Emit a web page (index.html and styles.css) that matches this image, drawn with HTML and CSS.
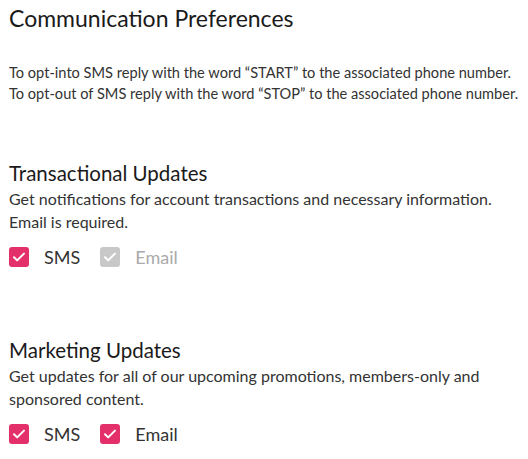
FILE: index.html
```html
<!DOCTYPE html>
<html>
<head>
<meta charset="utf-8">
<link rel="stylesheet" href="styles.css">
</head>
<body>
<div class="page">
  <h1 class="title">Communication Preferences</h1>
  <div class="intro">
    <p>To opt-into SMS reply with the word “START” to the associated phone number.</p>
    <p>To opt-out of SMS reply with the word “STOP” to the associated phone number.</p>
  </div>

  <section class="group">
    <h2 class="group-title">Transactional Updates</h2>
    <p class="group-desc">Get notifications for account transactions and necessary information. Email is required.</p>
    <div class="options">
      <label class="option">
        <span class="box checked"><svg viewBox="0 0 20 20"><path d="M5 10.2l3.2 3.2L15 6.6" /></svg></span>
        <span class="label">SMS</span>
      </label>
      <label class="option disabled">
        <span class="box checked"><svg viewBox="0 0 20 20"><path d="M5 10.2l3.2 3.2L15 6.6" /></svg></span>
        <span class="label">Email</span>
      </label>
    </div>
  </section>

  <section class="group">
    <h2 class="group-title">Marketing Updates</h2>
    <p class="group-desc">Get updates for all of our upcoming promotions, members-only and sponsored content.</p>
    <div class="options">
      <label class="option">
        <span class="box checked"><svg viewBox="0 0 20 20"><path d="M5 10.2l3.2 3.2L15 6.6" /></svg></span>
        <span class="label">SMS</span>
      </label>
      <label class="option">
        <span class="box checked"><svg viewBox="0 0 20 20"><path d="M5 10.2l3.2 3.2L15 6.6" /></svg></span>
        <span class="label">Email</span>
      </label>
    </div>
  </section>
</div>
</body>
</html>
```

FILE: styles.css
```css
* { box-sizing: border-box; }
html, body { margin: 0; padding: 0; background: #fff; }
body {
  font-family: Lato, "Open Sans", sans-serif;
  color: #333;
}
.page {
  padding: 4px 9px 0 9px;
  width: 528px;
}
.title {
  margin: 0;
  font-size: 23px;
  font-weight: 400;
  line-height: 28px;
  color: #1a1a1a;
}
.intro {
  margin-top: 30px;
  font-size: 14.6px;
  line-height: 21px;
}
.intro p { margin: 0; }
.group { margin-top: 55px; }
.group + .group { margin-top: 68px; }
.group-title {
  margin: 0;
  font-size: 20.5px;
  font-weight: 400;
  line-height: 28px;
  color: #1a1a1a;
}
.group-desc {
  margin: 0;
  font-size: 16px;
  line-height: 23px;
  width: 500px;
}
.options {
  display: flex;
  gap: 20px;
  margin-top: 13px;
  align-items: center;
}
.option {
  display: flex;
  align-items: center;
  gap: 15px;
  font-size: 18px;
  color: #333;
}
.box {
  width: 20px;
  height: 20px;
  border-radius: 3px;
  background: #e4306a;
  display: flex;
}
.box svg { width: 20px; height: 20px; }
.box path { fill: none; stroke: #fff; stroke-width: 2; stroke-linecap: round; stroke-linejoin: round; }
.option.disabled .box { background: #c8c8c8; }
.option.disabled .label { color: #aaa; }
```
